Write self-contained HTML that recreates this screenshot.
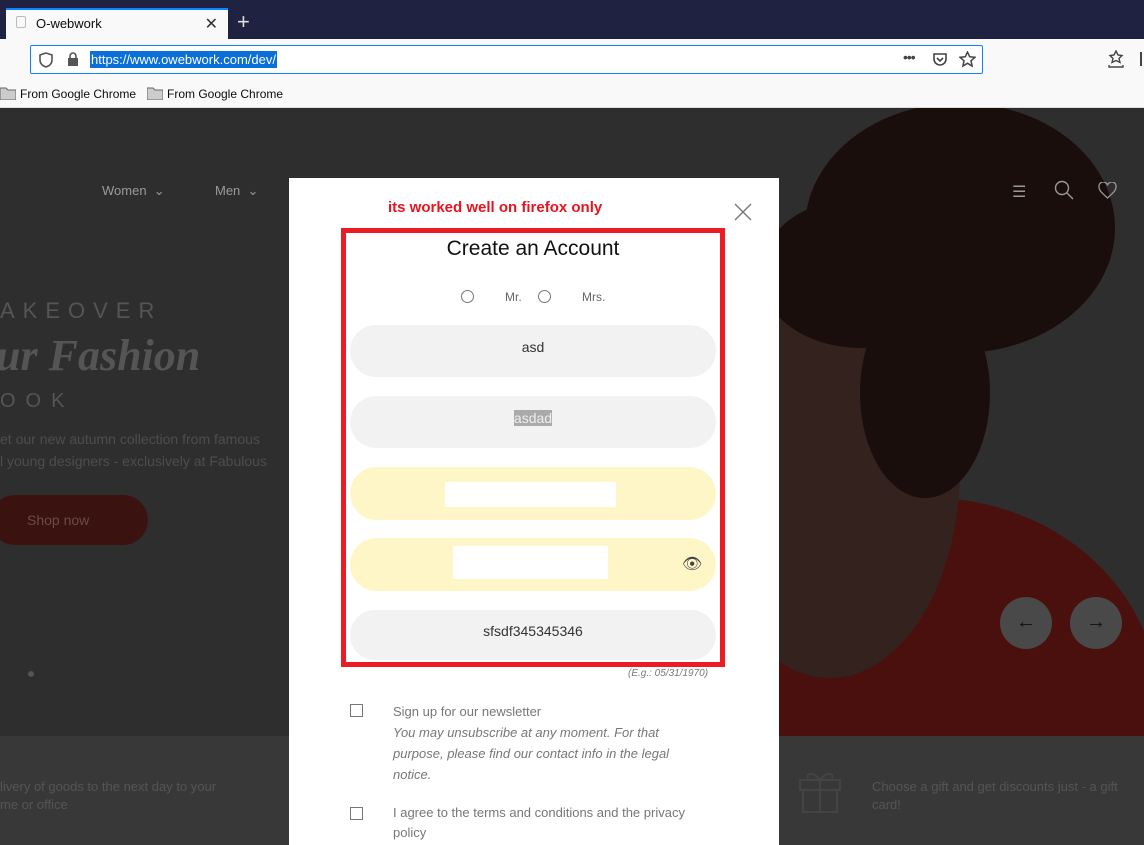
<!DOCTYPE html>
<html><head><meta charset="utf-8"><style>
*{box-sizing:border-box;margin:0;padding:0}
html,body{width:1144px;height:845px;overflow:hidden}
body{position:relative;font-family:"Liberation Sans",sans-serif;background:#2f2f2f}
.abs{position:absolute}
.tabbar{left:0;top:0;width:1144px;height:39px;background:#1f2240}
.tab{left:6px;top:8px;width:222px;height:31px;background:#f9f9fa;border-top:2px solid #0a84ff;font-size:13px;color:#0c0c0d;padding:6px 0 0 30px}
.nav{left:0;top:39px;width:1144px;height:42px;background:#f9f9fa}
.url{left:30px;top:45px;width:953px;height:29px;background:#fff;border:1px solid #0a84ff;border-radius:2px}
.bm{left:0;top:81px;width:1144px;height:27px;background:#f9f9fa;border-bottom:1px solid #ddd;font-size:12px;color:#0c0c0d}
.page{left:0;top:108px;width:1144px;height:737px;background:#2e2e2e;overflow:hidden}
.modal{left:289px;top:178px;width:490px;height:667px;background:#fff}
.inp{position:absolute;left:350px;width:366px;border-radius:27px;background:#f2f2f2;font-size:14px;color:#333;text-align:center}
.e{position:absolute;border-radius:50%}
</style></head><body>
<div class="abs tabbar"></div>
<div class="abs tab">O-webwork<span style="position:absolute;right:10px;top:4px;font-size:16px;color:#333">✕</span></div>
<div class="abs" style="left:16px;top:16px;width:10px;height:12px;border:1px solid #bbb;border-radius:2px"></div>
<div class="abs" style="left:237px;top:9px;color:#ddd;font-size:22px">+</div>
<div class="abs nav"></div>
<div class="abs url">
 <svg class="abs" style="left:8px;top:6px" width="14" height="16" viewBox="0 0 14 16"><path d="M7 1 L13 3 V8 C13 12 10 14 7 15 C4 14 1 12 1 8 V3 Z" fill="none" stroke="#555" stroke-width="1.6"/></svg>
 <svg class="abs" style="left:36px;top:6px" width="12" height="15" viewBox="0 0 12 15"><rect x="1" y="6" width="10" height="8" fill="#555"/><path d="M3 6V4a3 3 0 0 1 6 0v2" fill="none" stroke="#555" stroke-width="1.6"/></svg>
 <span class="abs" style="left:59px;top:5px;background:#0a6fd8;color:#fff;font-size:13px;padding:1px 1px">https://www.owebwork.com/dev/</span>
 <span class="abs" style="left:872px;top:3px;font-size:14px;color:#444;letter-spacing:-1px">•••</span>
 <svg class="abs" style="left:901px;top:6px" width="16" height="15" viewBox="0 0 16 15"><path d="M2 2h12v5a6 6 0 0 1-12 0z" fill="none" stroke="#444" stroke-width="1.6"/><path d="M5 6l3 3 3-3" fill="none" stroke="#444" stroke-width="1.6"/></svg>
 <svg class="abs" style="left:928px;top:5px" width="17" height="17" viewBox="0 0 17 17"><path d="M8.5 1l2.2 4.8 5.2.5-3.9 3.5 1.1 5.2-4.6-2.7-4.6 2.7 1.1-5.2L1.1 6.3l5.2-.5z" fill="none" stroke="#444" stroke-width="1.5"/></svg>
</div>
<svg class="abs" style="left:1108px;top:50px" width="16" height="18" viewBox="0 0 16 18"><path d="M8 1l2 4 4 .5-3 3 1 4-4-2-4 2 1-4-3-3 4-.5z" fill="none" stroke="#444" stroke-width="1.4"/><path d="M1 15v2h14v-2" fill="none" stroke="#444" stroke-width="1.4"/></svg>
<div class="abs" style="left:1140px;top:52px;width:2px;height:14px;background:#444"></div>
<div class="abs bm">
 <svg class="abs" style="left:0;top:6px" width="16" height="13" viewBox="0 0 16 13"><path d="M0 1h6l2 2h8v10H0z" fill="#ccc" stroke="#666"/></svg>
 <span class="abs" style="left:20px;top:6px">From Google Chrome</span>
 <svg class="abs" style="left:147px;top:6px" width="16" height="13" viewBox="0 0 16 13"><path d="M0 1h6l2 2h8v10H0z" fill="#ccc" stroke="#666"/></svg>
 <span class="abs" style="left:167px;top:6px">From Google Chrome</span>
</div>
<div class="abs page">
 <div class="e" style="left:700px;top:390px;width:460px;height:420px;background:#4a100d"></div>
 <div class="e" style="left:700px;top:150px;width:260px;height:420px;background:#33221e"></div>
 <div class="e" style="left:805px;top:-5px;width:310px;height:250px;background:#1a0e0c"></div>
 <div class="e" style="left:760px;top:90px;width:200px;height:150px;background:#1a0e0c"></div>
 <div class="e" style="left:860px;top:180px;width:130px;height:210px;background:#1a0e0c"></div>
 <div class="abs" style="left:0;top:628px;width:1144px;height:109px;background:#383838"></div>
 <div class="abs" style="left:102px;top:75px;color:#9a9a9a;font-size:13px">Women &nbsp;⌄</div>
 <div class="abs" style="left:215px;top:75px;color:#9a9a9a;font-size:13px">Men &nbsp;⌄</div>
 <div class="abs" style="left:0;top:190px;color:#555;font-size:22px;letter-spacing:8px">AKEOVER</div>
 <div class="abs" style="left:-4px;top:222px;color:#555;font-size:44px;font-style:italic;font-weight:bold;font-family:'Liberation Serif',serif">ur Fashion</div>
 <div class="abs" style="left:0;top:282px;color:#555;font-size:20px;letter-spacing:10px">OOK</div>
 <div class="abs" style="left:0;top:320px;color:#4d4d4d;font-size:14px;line-height:22px;white-space:nowrap">et our new autumn collection from famous<br>l young designers - exclusively at Fabulous</div>
 <div class="abs" style="left:-10px;top:387px;width:158px;height:50px;border-radius:25px;background:#3a1311;color:#6a4a48;font-size:14px;padding:17px 0 0 37px">Shop now</div>
 <div class="abs" style="left:28px;top:563px;width:6px;height:6px;border-radius:3px;background:#555"></div>
 <div class="abs" style="left:1000px;top:489px;width:52px;height:52px;border-radius:26px;background:#494949;color:#111;font-size:20px;text-align:center;line-height:50px">←</div>
 <div class="abs" style="left:1070px;top:489px;width:52px;height:52px;border-radius:26px;background:#494949;color:#111;font-size:20px;text-align:center;line-height:50px">→</div>
 <div class="abs" style="left:1012px;top:74px;color:#999;font-size:16px">☰</div>
 <svg class="abs" style="left:1054px;top:72px" width="20" height="20" viewBox="0 0 20 20"><circle cx="8" cy="8" r="6.5" fill="none" stroke="#999" stroke-width="1.4"/><path d="M13 13l6 6" stroke="#999" stroke-width="1.4"/></svg>
 <svg class="abs" style="left:1098px;top:74px" width="19" height="17" viewBox="0 0 19 17"><path d="M9.5 16C4 11 1 8.5 1 5a4 4 0 0 1 8.5-1.5A4 4 0 0 1 18 5c0 3.5-3 6-8.5 11z" fill="none" stroke="#999" stroke-width="1.3"/></svg>
 <div class="abs" style="left:0;top:670px;color:#555;font-size:13px;line-height:18px">livery of goods to the next day to your<br>me or office</div>
 <div class="abs" style="left:872px;top:670px;color:#555;font-size:13px;line-height:18px">Choose a gift and get discounts just - a gift<br>card!</div>
 <svg class="abs" style="left:798px;top:660px" width="44" height="46" viewBox="0 0 44 46"><g fill="none" stroke="#444" stroke-width="2"><rect x="2" y="12" width="40" height="10"/><rect x="5" y="22" width="34" height="22"/><path d="M22 12v32M22 12c-6-8-14-8-12-2M22 12c6-8 14-8 12-2"/></g></svg>
</div>
<div class="abs modal"></div>
<div class="abs" style="left:388px;top:199px;color:#e8141e;font-weight:bold;font-size:15px">its worked well on firefox only</div>
<svg class="abs" style="left:734px;top:203px" width="18" height="18" viewBox="0 0 18 18"><path d="M1 1L17 17M17 1L1 17" stroke="#777" stroke-width="1.4"/></svg>
<div class="abs" style="left:341px;top:228px;width:384px;height:439px;border:5px solid #ec1c24"></div>
<div class="abs" style="left:341px;top:237px;width:384px;text-align:center;font-size:21px;color:#111">Create an Account</div>
<div class="abs" style="left:461px;top:290px;width:13px;height:13px;border:1px solid #777;border-radius:50%"></div>
<div class="abs" style="left:505px;top:290px;font-size:12px;color:#666">Mr.</div>
<div class="abs" style="left:538px;top:290px;width:13px;height:13px;border:1px solid #777;border-radius:50%"></div>
<div class="abs" style="left:582px;top:290px;font-size:12px;color:#666">Mrs.</div>
<div class="inp" style="top:325px;height:52px;line-height:44px">asd</div>
<div class="inp" style="top:396px;height:52px;line-height:44px"><span style="background:#aaa;color:#eee">asdad</span></div>
<div class="inp" style="top:467px;height:53px;background:#fff6c8"><div style="position:absolute;left:95px;top:15px;width:171px;height:25px;background:#fff"></div></div>
<div class="inp" style="top:538px;height:53px;background:#fff6c8"><div style="position:absolute;left:103px;top:8px;width:155px;height:33px;background:#fff"></div><span style="position:absolute;left:332px;top:16px;font-size:16px;color:#444">👁</span></div>
<div class="inp" style="top:610px;height:50px;line-height:42px">sfsdf345345346</div>
<div class="abs" style="left:628px;top:668px;font-size:10px;color:#777;font-style:italic">(E.g.: 05/31/1970)</div>
<div class="abs" style="left:350px;top:704px;width:13px;height:13px;border:1px solid #777"></div>
<div class="abs" style="left:393px;top:701px;font-size:13px;color:#777;line-height:21px;width:300px">Sign up for our newsletter<br><i>You may unsubscribe at any moment. For that purpose, please find our contact info in the legal notice.</i></div>
<div class="abs" style="left:350px;top:807px;width:13px;height:13px;border:1px solid #777"></div>
<div class="abs" style="left:393px;top:803px;font-size:13px;color:#777;line-height:20px;width:320px;height:42px;overflow:hidden">I agree to the terms and conditions and the privacy policy</div>
</body></html>
